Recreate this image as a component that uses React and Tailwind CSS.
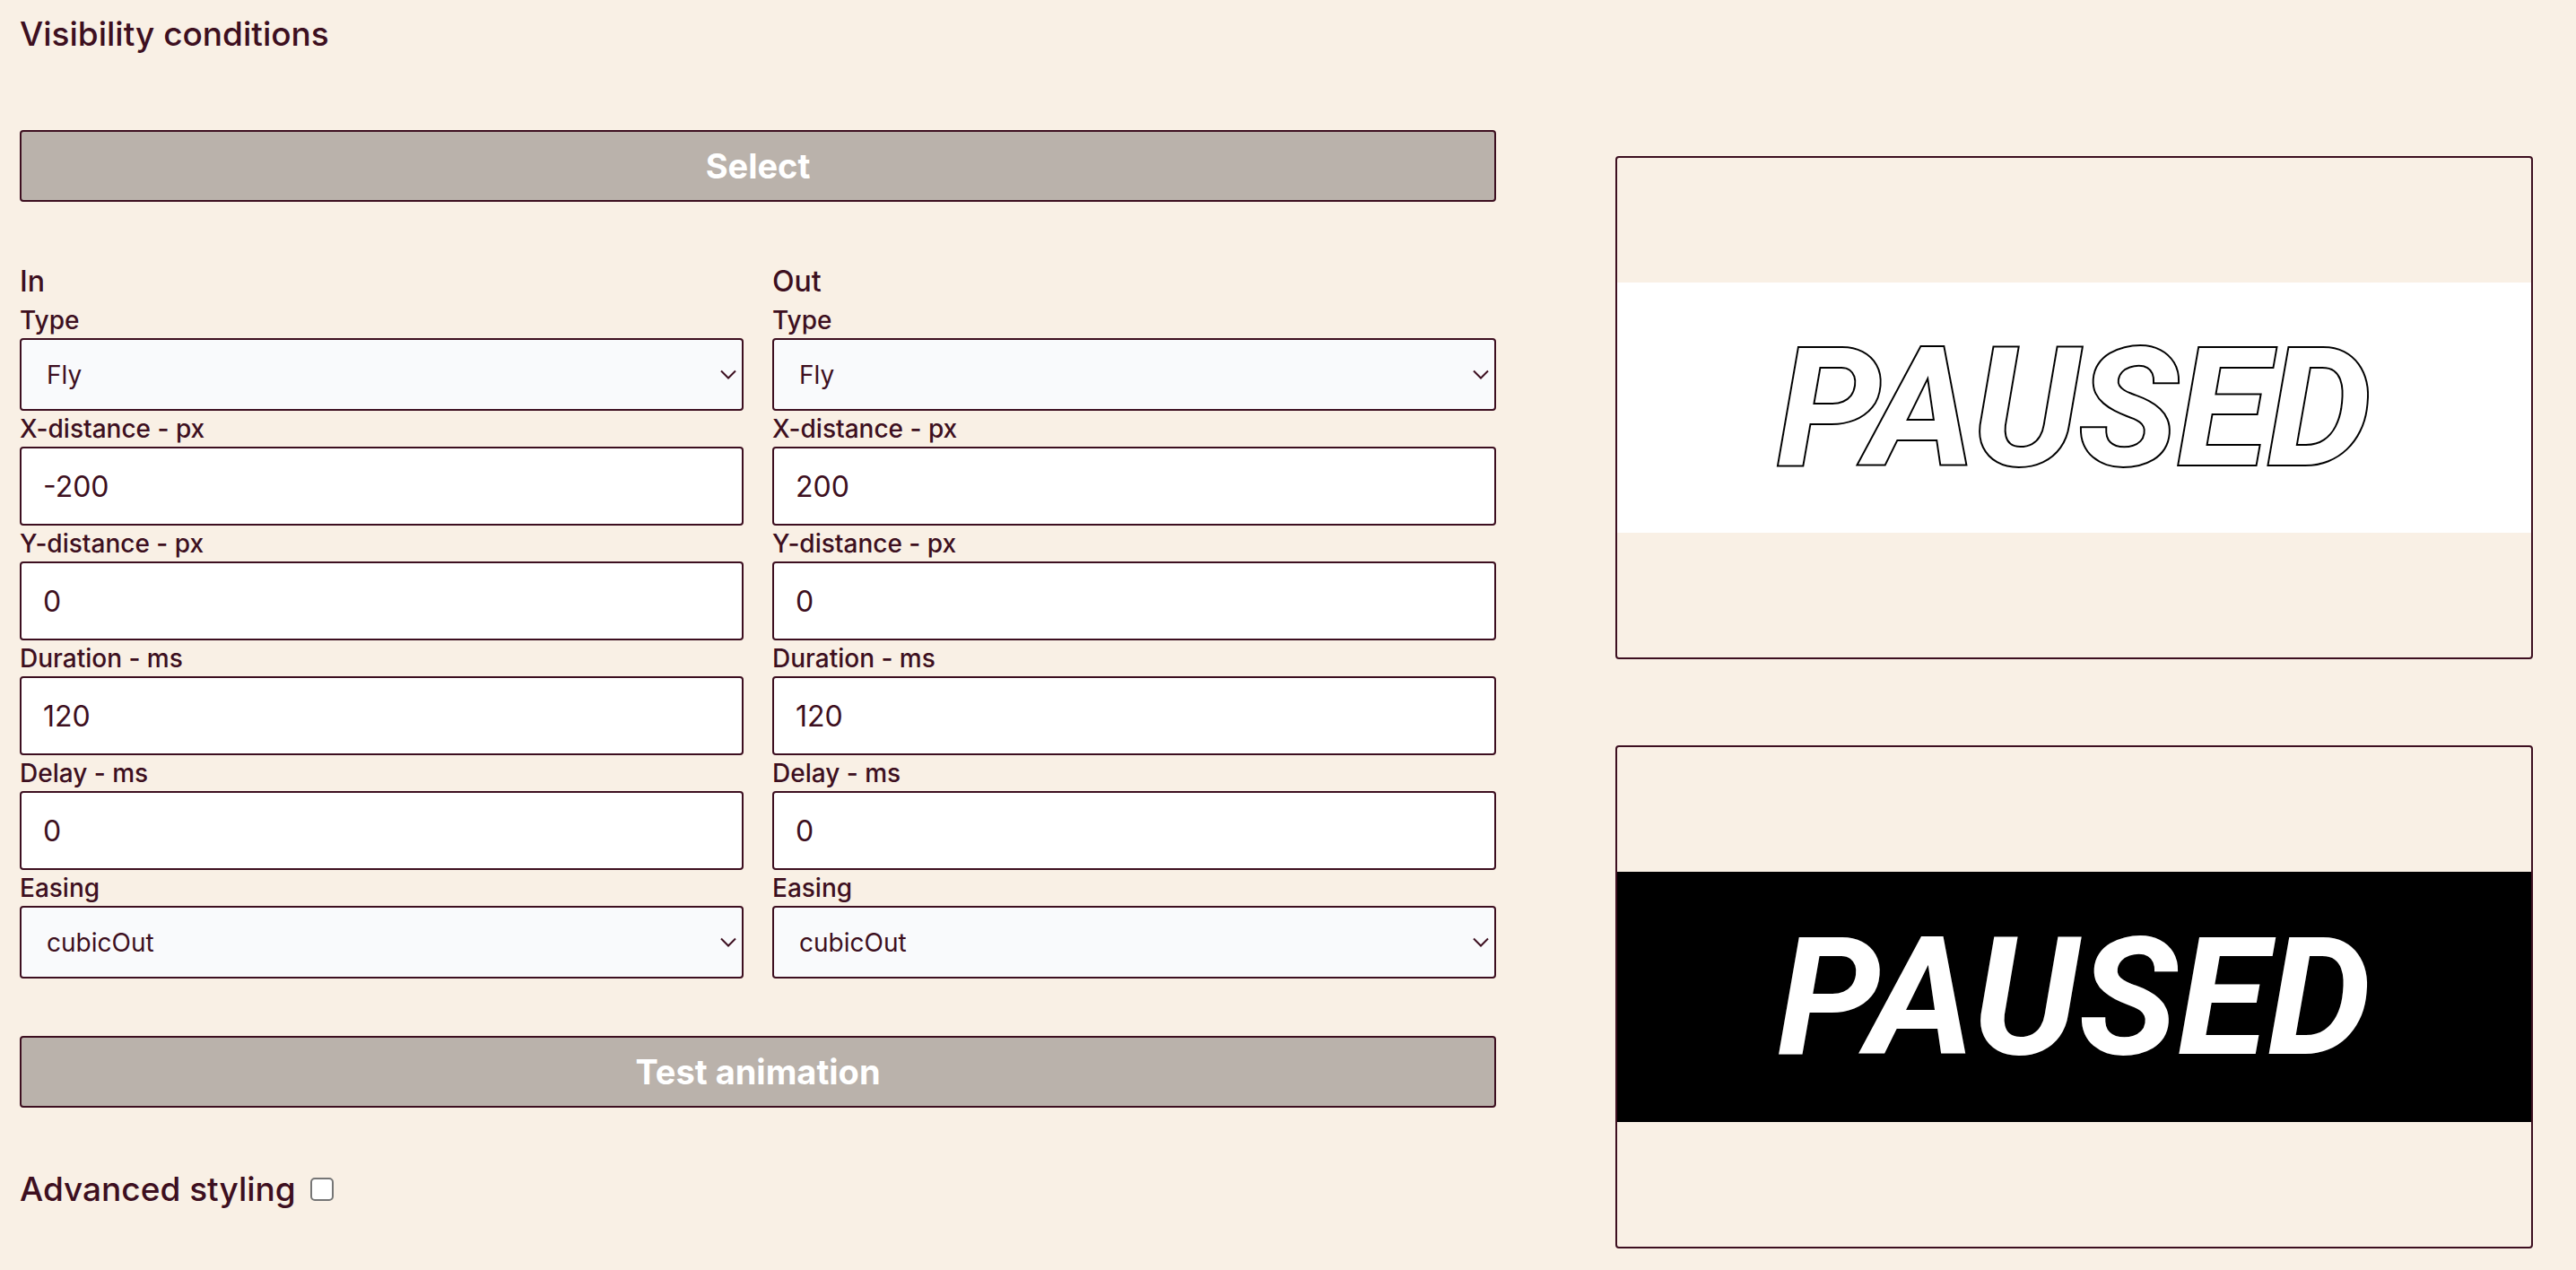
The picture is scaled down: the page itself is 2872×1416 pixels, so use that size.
const control =
  "w-full rounded-[4px] border-2 border-[#3d0f20] text-[#3d0f20] outline-none";

function SelectField({ id, label, value, options }) {
  return (
    <div>
      <label htmlFor={id} className="block text-[28px] leading-10 font-medium">
        {label}
      </label>
      <div className="relative">
        <select
          id={id}
          defaultValue={value}
          className={`${control} block h-[81px] appearance-none bg-[#f9fafc] px-7 text-[28px]`}
        >
          {options.map((option) => (
            <option key={option}>{option}</option>
          ))}
        </select>
        <svg
          viewBox="0 0 20 12"
          className="pointer-events-none absolute inset-y-0 right-[7px] my-auto h-3 w-5"
          fill="none"
          stroke="#3d0f20"
          strokeWidth="2"
          aria-hidden="true"
        >
          <path d="M2 1.5 10 9.5 18 1.5" />
        </svg>
      </div>
    </div>
  );
}

function NumberField({ id, label, value }) {
  return (
    <div>
      <label htmlFor={id} className="block text-[28px] leading-10 font-medium">
        {label}
      </label>
      <input
        id={id}
        type="text"
        inputMode="numeric"
        defaultValue={value}
        className={`${control} block h-22 bg-white px-6 text-[32px]`}
      />
    </div>
  );
}

function TransitionFields({ title, prefix, x }) {
  return (
    <section>
      <h2 className="text-[32px] leading-[47px] font-medium">{title}</h2>
      <SelectField id={`${prefix}-type`} label="Type" value="Fly" options={["Fly", "Fade", "Slide", "Scale"]} />
      <NumberField id={`${prefix}-x`} label="X-distance - px" value={x} />
      <NumberField id={`${prefix}-y`} label="Y-distance - px" value="0" />
      <NumberField id={`${prefix}-duration`} label="Duration - ms" value="120" />
      <NumberField id={`${prefix}-delay`} label="Delay - ms" value="0" />
      <SelectField id={`${prefix}-easing`} label="Easing" value="cubicOut" options={["cubicOut", "cubicIn", "linear"]} />
    </section>
  );
}

function WideButton({ children }) {
  return (
    <button
      type="button"
      className="h-20 w-full rounded-[4px] border-2 border-[#3d0f20] bg-[#bab2ab] text-[38px] leading-none font-bold text-white"
    >
      {children}
    </button>
  );
}

function Preview({ band }) {
  return (
    <div className="flex aspect-[1023/561] w-full flex-col justify-center rounded-[4px] border-2 border-[#3d0f20]">
      <div className={`flex h-1/2 items-center justify-center ${band}`}>
        <span className="font-[Roboto,sans-serif] text-[184px] leading-none font-bold text-white italic [-webkit-text-stroke:4px_#000] [paint-order:stroke_fill]">
          PAUSED
        </span>
      </div>
    </div>
  );
}

export default function App() {
  return (
    <main className="min-h-screen bg-[#f9f0e5] pr-12 pl-[22px] font-[Inter,sans-serif] text-[#3d0f20]">
      <div className="grid grid-cols-[1646fr_1023fr] gap-x-[133px]">
        <form onSubmit={(e) => e.preventDefault()}>
          <h1 className="pt-3 text-[37px] leading-[52px] font-medium">Visibility conditions</h1>
          <div className="mt-[81px]">
            <WideButton>Select</WideButton>
          </div>
          <div className="mt-[65px] grid grid-cols-2 gap-x-8">
            <TransitionFields title="In" prefix="in" x="-200" />
            <TransitionFields title="Out" prefix="out" x="200" />
          </div>
          <div className="mt-16">
            <WideButton>Test animation</WideButton>
          </div>
          <div className="mt-[65px] flex items-center gap-4">
            <label htmlFor="advanced" className="text-[37px] leading-[52px] font-medium">
              Advanced styling
            </label>
            <input
              id="advanced"
              type="checkbox"
              className="size-[26px] appearance-none rounded-[5px] border-2 border-[#767676] bg-white checked:bg-[#3d0f20]"
            />
          </div>
        </form>
        <aside className="flex flex-col gap-24 pt-[174px]">
          <Preview band="bg-white" />
          <Preview band="bg-black" />
        </aside>
      </div>
    </main>
  );
}
